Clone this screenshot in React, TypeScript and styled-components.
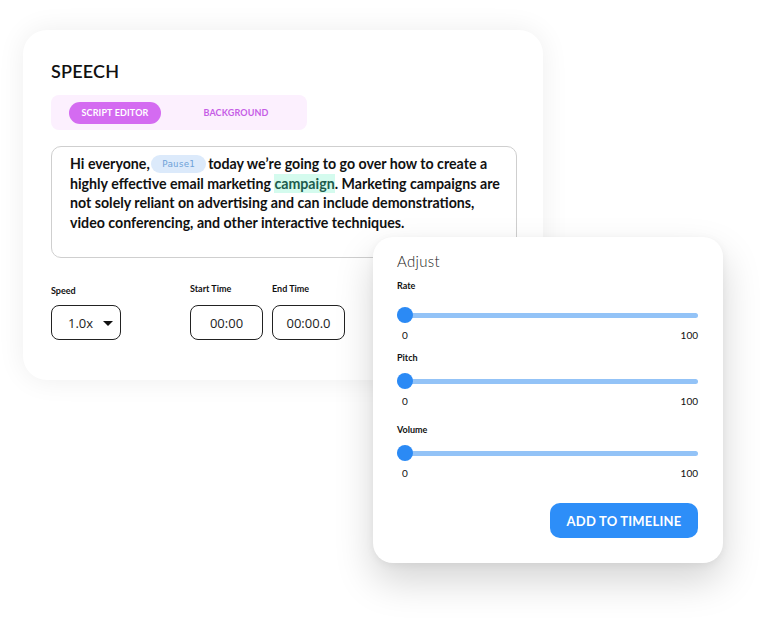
import React from "react";
import styled, { createGlobalStyle } from "styled-components";

const GlobalStyle = createGlobalStyle`
  html, body {
    margin: 0;
    padding: 0;
    background: #ffffff;
  }
  body {
    font-family: Lato, "Noto Sans", sans-serif;
    color: #111;
  }
`;

// space = gap above the label, gap = label -> track
const sliders = [
  { label: "Rate", value: 0, space: 9, gap: 15 },
  { label: "Pitch", value: 0, space: 10, gap: 9 },
  { label: "Volume", value: 0, space: 16, gap: 9 },
];

const App = () => {
  return (
    <>
      <GlobalStyle />
      <Stage>
        <SpeechCard>
          <Title>SPEECH</Title>

          <TabBar>
            <Tab $active>SCRIPT EDITOR</Tab>
            <Tab>BACKGROUND</Tab>
          </TabBar>

          <ScriptBox>
            Hi everyone, <PauseChip>Pause1</PauseChip> today we’re going to go over how to create a
            highly effective email marketing <Highlight>campaign</Highlight>. Marketing campaigns
            are not solely reliant on advertising and can include demonstrations, video
            conferencing, and other interactive techniques.
          </ScriptBox>

          <FieldRow>
            <Field $width={70} $labelOffset={2}>
              <FieldLabel>Speed</FieldLabel>
              <SelectBox>
                <span>1.0x</span>
                <Caret />
              </SelectBox>
            </Field>
            <Field $width={73} $spaceBefore={69}>
              <FieldLabel>Start Time</FieldLabel>
              <TimeBox>00:00</TimeBox>
            </Field>
            <Field $width={73} $spaceBefore={9}>
              <FieldLabel>End Time</FieldLabel>
              <TimeBox>00:00.0</TimeBox>
            </Field>
          </FieldRow>
        </SpeechCard>

        <AdjustCard>
          <AdjustTitle>Adjust</AdjustTitle>
          {sliders.map((s) => (
            <SliderGroup key={s.label} $space={s.space}>
              <SliderLabel>{s.label}</SliderLabel>
              <Track $gap={s.gap}>
                <Thumb style={{ left: `${s.value}%` }} />
              </Track>
              <Scale>
                <ScaleMin>0</ScaleMin>
                <span>100</span>
              </Scale>
            </SliderGroup>
          ))}
          <ButtonRow>
            <AddButton>ADD TO TIMELINE</AddButton>
          </ButtonRow>
        </AdjustCard>
      </Stage>
    </>
  );
};

export default App;

const Stage = styled.div`
  position: relative;
  width: 762px;
  height: 622px;
  padding: 30px 0 0 23px;
  box-sizing: border-box;
  overflow: hidden;
`;

const SpeechCard = styled.section`
  width: 520px;
  height: 350px;
  box-sizing: border-box;
  padding: 29px 26px 0 28px;
  background: #fff;
  border-radius: 24px;
  box-shadow: 0 0 28px rgba(0, 0, 0, 0.07);
  display: flex;
  flex-direction: column;
  align-items: flex-start;
`;

const Title = styled.h1`
  margin: 0;
  font-family: Lato, "Noto Sans", sans-serif;
  font-size: 18px;
  line-height: 24px;
  font-weight: 600;
  letter-spacing: 0.2px;
  color: #111;
`;

const TabBar = styled.div`
  margin-top: 12px;
  width: 256px;
  height: 35px;
  box-sizing: border-box;
  padding: 7px 18px;
  border-radius: 8px;
  background: #fcf0fe;
  display: flex;
  align-items: center;
  gap: 10px;
`;

const Tab = styled.div<{ $active?: boolean }>`
  width: 92px;
  height: 22px;
  border-radius: 11px;
  display: flex;
  align-items: center;
  justify-content: center;
  font-family: Lato, "Noto Sans", sans-serif;
  font-size: 9px;
  font-weight: 700;
  letter-spacing: 0.15px;
  background: ${(p) => (p.$active ? "#d46bf1" : "transparent")};
  color: ${(p) => (p.$active ? "#ffffff" : "#c65ee6")};
  ${(p) => (p.$active ? "" : "margin-left: 19px;")}
`;

const ScriptBox = styled.div`
  margin-top: 16px;
  width: 466px;
  height: 112px;
  box-sizing: border-box;
  padding: 7px 10px 0 18px;
  border: 1px solid #cfcfcf;
  border-radius: 10px;
  font-family: Lato, "Noto Sans", sans-serif;
  font-weight: 700;
  font-size: 14.2px;
  line-height: 19.6px;
  color: #111;
`;

const PauseChip = styled.span`
  display: inline-block;
  vertical-align: middle;
  margin: -3px -1px 0 -2px;
  padding: 0 11px;
  height: 18px;
  line-height: 18px;
  border-radius: 9px;
  background: #dceafb;
  color: #6fa2d8;
  font-family: "DejaVu Sans Mono", "Liberation Mono", monospace;
  font-size: 9px;
  font-weight: 400;
`;

const Highlight = styled.span`
  background: #d4fbee;
  color: #1d5c4d;
  padding: 1px 0;
`;

const FieldRow = styled.div`
  margin-top: 25px;
  display: flex;
  align-items: flex-start;
`;

const Field = styled.div<{ $width: number; $spaceBefore?: number; $labelOffset?: number }>`
  width: ${(p) => p.$width}px;
  margin-left: ${(p) => p.$spaceBefore ?? 0}px;
  display: flex;
  flex-direction: column;
  gap: 10px;
  padding-top: ${(p) => p.$labelOffset ?? 0}px;
  & > *:last-child {
    margin-top: ${(p) => -(p.$labelOffset ?? 0)}px;
  }
`;

const FieldLabel = styled.div`
  font-family: Lato, "Noto Sans", sans-serif;
  font-size: 9px;
  line-height: 12px;
  font-weight: 700;
  color: #111;
`;

const SelectBox = styled.div`
  height: 35px;
  box-sizing: border-box;
  border: 1px solid #222;
  border-radius: 8px;
  display: flex;
  align-items: center;
  padding-left: 16px;
  gap: 10px;
  font-family: "Open Sans", "Noto Sans", sans-serif;
  font-size: 13px;
  color: #222;
`;

const Caret = styled.span`
  width: 0;
  height: 0;
  border-left: 5px solid transparent;
  border-right: 5px solid transparent;
  border-top: 5px solid #111;
  margin-top: 1px;
`;

const TimeBox = styled.div`
  height: 35px;
  box-sizing: border-box;
  border: 1px solid #222;
  border-radius: 8px;
  display: flex;
  align-items: center;
  justify-content: center;
  font-family: "Open Sans", "Noto Sans", sans-serif;
  font-size: 13px;
  color: #222;
`;

const AdjustCard = styled.section`
  position: absolute;
  left: 373px;
  top: 237px;
  width: 350px;
  height: 326px;
  box-sizing: border-box;
  padding: 14px 25px 0 24px;
  background: #fff;
  border-radius: 20px;
  box-shadow: 0 18px 38px rgba(0, 0, 0, 0.17), 0 2px 8px rgba(0, 0, 0, 0.05);
  display: flex;
  flex-direction: column;
`;

const AdjustTitle = styled.h2`
  margin: 0;
  font-family: Lato, "Noto Sans", sans-serif;
  font-size: 15px;
  line-height: 20px;
  font-weight: 300;
  color: #222;
  letter-spacing: 0.3px;
`;

const SliderGroup = styled.div<{ $space: number }>`
  margin-top: ${(p) => p.$space}px;
  display: flex;
  flex-direction: column;
`;

const SliderLabel = styled.div`
  font-family: Lato, "Noto Sans", sans-serif;
  font-size: 9px;
  line-height: 12px;
  font-weight: 700;
  color: #111;
`;

const Track = styled.div<{ $gap: number }>`
  position: relative;
  margin-top: ${(p) => p.$gap}px;
  height: 16px;
  display: flex;
  align-items: center;
  &::before {
    content: "";
    flex: 1;
    height: 5px;
    border-radius: 3px;
    background: #93c3f7;
  }
`;

const Thumb = styled.span`
  position: absolute;
  top: 0;
  width: 16px;
  height: 16px;
  border-radius: 50%;
  background: #2b8af5;
`;

const Scale = styled.div`
  margin-top: 5px;
  display: flex;
  justify-content: space-between;
  font-family: Lato, "Noto Sans", sans-serif;
  font-size: 10px;
  line-height: 14px;
  color: #111;
`;

const ScaleMin = styled.span`
  width: 16px;
  text-align: center;
`;

const ButtonRow = styled.div`
  margin-top: 23px;
  display: flex;
  justify-content: flex-end;
`;

const AddButton = styled.button`
  width: 148px;
  height: 35px;
  border: none;
  border-radius: 10px;
  background: #2d8ef8;
  color: #fff;
  font-family: Lato, "Noto Sans", sans-serif;
  font-size: 13px;
  font-weight: 700;
  letter-spacing: 0.2px;
  cursor: pointer;
`;
